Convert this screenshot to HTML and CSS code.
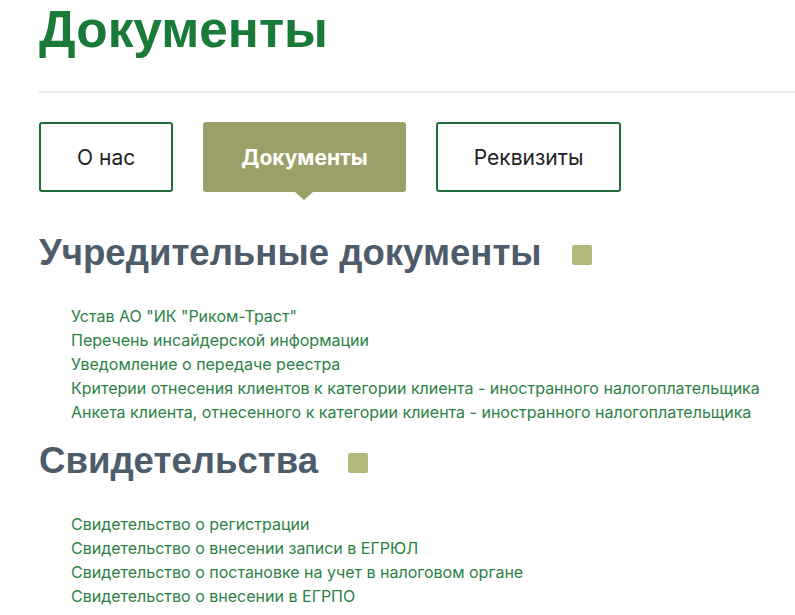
FILE: index.html
```html
<!DOCTYPE html>
<html lang="ru">
<head>
<meta charset="utf-8">
<title>Документы</title>
<link rel="stylesheet" href="styles.css">
</head>
<body>
<main class="page">
  <h1 class="title">Документы</h1>
  <div class="rule"></div>
  <nav class="tabs">
    <a class="tab">О нас</a>
    <a class="tab tab-active">Документы</a>
    <a class="tab">Реквизиты</a>
  </nav>
  <section class="group">
    <h2 class="group-title">Учредительные документы<span class="mark"></span></h2>
    <ul class="docs">
      <li><a>Устав АО "ИК "Риком-Траст"</a></li>
      <li><a>Перечень инсайдерской информации</a></li>
      <li><a>Уведомление о передаче реестра</a></li>
      <li><a>Критерии отнесения клиентов к категории клиента - иностранного налогоплательщика</a></li>
      <li><a>Анкета клиента, отнесенного к категории клиента - иностранного налогоплательщика</a></li>
    </ul>
  </section>
  <section class="group group-second">
    <h2 class="group-title">Свидетельства<span class="mark"></span></h2>
    <ul class="docs">
      <li><a>Свидетельство о регистрации</a></li>
      <li><a>Свидетельство о внесении записи в ЕГРЮЛ</a></li>
      <li><a>Свидетельство о постановке на учет в налоговом органе</a></li>
      <li><a>Свидетельство о внесении в ЕГРПО</a></li>
    </ul>
  </section>
</main>
</body>
</html>
```
FILE: styles.css
```css
html, body {
  margin: 0;
  padding: 0;
  background: #ffffff;
}
.page {
  padding-left: 39px;
  overflow: hidden;
  height: 615px;
}
.title {
  margin: 0;
  padding-top: 2px;
  font-family: "Liberation Sans", Arial, sans-serif;
  font-weight: 700;
  font-size: 51.4px;
  line-height: 54px;
  color: #1a7a37;
}
.rule {
  margin-top: 35px;
  height: 2px;
  background: #ebebeb;
}
.tabs {
  display: flex;
  gap: 30px;
  margin-top: 29px;
}
.tab {
  position: relative;
  display: flex;
  align-items: center;
  height: 70px;
  box-sizing: border-box;
  padding: 0 36px;
  border: 2px solid #1f6d38;
  border-radius: 3px;
  font-family: Inter, "Noto Sans", sans-serif;
  font-size: 21px;
  color: #222222;
}
.tab-active {
  background: #9c9f68;
  border-color: #9c9f68;
  color: #ffffff;
  font-weight: 700;
}
.tab-active::after {
  content: "";
  position: absolute;
  left: 50%;
  bottom: -10px;
  margin-left: -9px;
  border-left: 9px solid transparent;
  border-right: 9px solid transparent;
  border-top: 8px solid #9c9f68;
}
.group {
  margin-top: 41px;
}
.group-second {
  margin-top: 17px;
}
.group-title {
  margin: 0;
  font-family: "Liberation Sans", Arial, sans-serif;
  font-weight: 700;
  font-size: 36.6px;
  line-height: 40px;
  color: #4d5c6b;
}
.mark {
  display: inline-block;
  width: 20px;
  height: 20px;
  margin-left: 30px;
  border-radius: 2px;
  background: #b3b87e;
}
.docs {
  list-style: none;
  margin: 31px 0 0 0;
  padding: 0 0 0 32px;
}
.docs li {
  font-family: Inter, "Noto Sans", sans-serif;
  font-size: 16px;
  line-height: 24px;
}
.docs a {
  color: #2a8245;
  text-decoration: none;
}
```
